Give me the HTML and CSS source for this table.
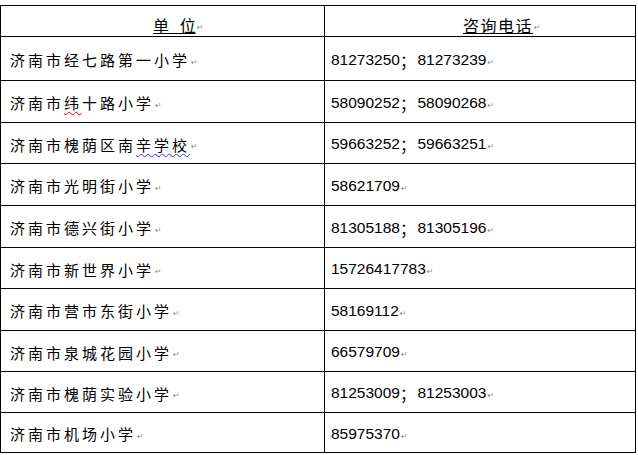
FILE: index.html
```html
<!DOCTYPE html>
<html lang="zh">
<head>
<meta charset="utf-8">
<link rel="stylesheet" href="styles.css">
</head>
<body>
<div class="table">
  <div class="cell head h1"><span class="ul">单&nbsp;&nbsp;&nbsp;位</span><span class="pm">↵</span></div>
  <div class="cell head h2"><span class="ul">咨询电话</span><span class="pm">↵</span></div>

  <div class="cell name">济南市经七路第一小学<span class="pm">↵</span></div>
  <div class="cell tel">81273250<span class="sep">；</span>81273239<span class="pm">↵</span></div>

  <div class="cell name">济南市<span class="wavy-red">纬</span>十路小学<span class="pm">↵</span></div>
  <div class="cell tel">58090252<span class="sep">；</span>58090268<span class="pm">↵</span></div>

  <div class="cell name">济南市槐荫区南<span class="wavy-blue">辛学校</span><span class="pm">↵</span></div>
  <div class="cell tel">59663252<span class="sep">；</span>59663251<span class="pm">↵</span></div>

  <div class="cell name">济南市光明街小学<span class="pm">↵</span></div>
  <div class="cell tel">58621709<span class="pm">↵</span></div>

  <div class="cell name">济南市德兴街小学<span class="pm">↵</span></div>
  <div class="cell tel">81305188<span class="sep">；</span>81305196<span class="pm">↵</span></div>

  <div class="cell name">济南市新世界小学<span class="pm">↵</span></div>
  <div class="cell tel">15726417783<span class="pm">↵</span></div>

  <div class="cell name">济南市营市东街小学<span class="pm">↵</span></div>
  <div class="cell tel">58169112<span class="pm">↵</span></div>

  <div class="cell name">济南市泉城花园小学<span class="pm">↵</span></div>
  <div class="cell tel">66579709<span class="pm">↵</span></div>

  <div class="cell name">济南市槐荫实验小学<span class="pm">↵</span></div>
  <div class="cell tel">81253009<span class="sep">；</span>81253003<span class="pm">↵</span></div>

  <div class="cell name">济南市机场小学<span class="pm">↵</span></div>
  <div class="cell tel">85975370<span class="pm">↵</span></div>
</div>
</body>
</html>
```

FILE: styles.css
```css
html, body {
  margin: 0;
  padding: 0;
  background: #ffffff;
}
body {
  padding-top: 5px;
  font-family: "Noto Sans CJK SC", "Liberation Sans", sans-serif;
  color: #000;
}
.table {
  display: grid;
  width: 636px;
  grid-template-columns: 324px 311px;
  grid-template-rows: 31px 44px 42px 41px 42px 42px 41px 42px 41px 41px 40px;
  border-left: 1px solid #000;
  border-top: 1px solid #000;
  box-sizing: border-box;
}
.cell {
  border-right: 1px solid #000;
  border-bottom: 1px solid #000;
  box-sizing: border-box;
  display: flex;
  align-items: center;
  white-space: nowrap;
  overflow: hidden;
}
.head {
  align-items: flex-end;
  font-size: 16px;
  line-height: 20px;
  padding-bottom: 1px;
  overflow: visible;
}
.h1 {
  padding-left: 152px;
}
.h2 {
  padding-left: 138px;
  letter-spacing: 1.5px;
}
.ul {
  text-decoration: underline;
  text-underline-offset: 1px;
}
.name {
  padding-left: 9px;
  font-size: 15px;
  letter-spacing: 3px;
  padding-top: 2px;
}
.tel {
  padding-left: 6px;
  font-family: "Liberation Sans", Arial, sans-serif;
  font-size: 15.5px;
  padding-top: 2px;
}
.sep {
  font-family: "Noto Sans CJK SC", sans-serif;
  margin-right: 2px;
}
.pm {
  font-family: "DejaVu Sans", sans-serif;
  font-size: 8px;
  line-height: 10px;
  color: #8a8a8a;
  letter-spacing: 0;
  margin-left: 1px;
  align-self: center;
  padding-top: 6px;
}
.head .pm {
  align-self: flex-end;
  padding-bottom: 2px;
}
.wavy-red {
  text-decoration: underline wavy #ff0000;
  text-decoration-thickness: 1px;
  text-underline-offset: 2px;
}
.wavy-blue {
  text-decoration: underline wavy #3030ff;
  text-decoration-thickness: 1px;
  text-underline-offset: 2px;
}
```
